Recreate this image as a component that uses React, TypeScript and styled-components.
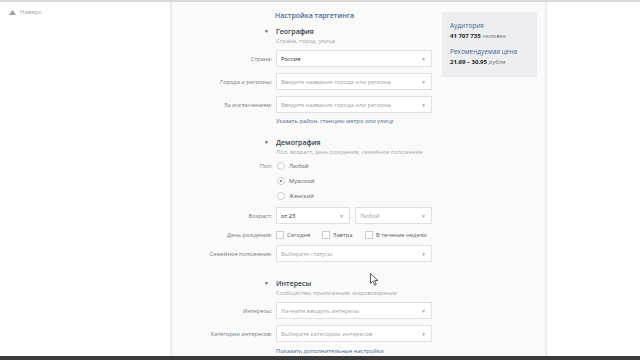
import React from "react";
import styled, { createGlobalStyle } from "styled-components";

const GlobalStyle = createGlobalStyle`
  html, body {
    margin: 0;
    padding: 0;
    background: #fff;
    font-family: "Open Sans", "Noto Sans", sans-serif;
  }
`;

const Page = styled.div`
  position: relative;
  width: 640px;
  height: 360px;
  overflow: hidden;
  display: flex;
  flex-direction: column;
  border-top: 2px solid #d9d9d9;
  box-sizing: border-box;
`;

const Body = styled.div`
  flex: 1;
  display: flex;
  min-height: 0;
`;

const Sidebar = styled.div`
  width: 170px;
  padding: 5px 0 0 9px;
  box-sizing: border-box;
`;

const UpLink = styled.div`
  display: flex;
  align-items: center;
  gap: 4px;
  height: 10px;
  font-size: 6px;
  color: #9aa1a8;
`;

const Main = styled.div`
  width: 377px;
  background: #fafafa;
  border-left: 2px solid #ececec;
  border-right: 2px solid #ececec;
  box-sizing: border-box;
  display: flex;
  gap: 10px;
  padding-top: 6px;
`;

const Form = styled.div`
  width: 260px;
  display: flex;
  flex-direction: column;
`;

const Row = styled.div<{ $h?: number; $mt?: number }>`
  display: grid;
  grid-template-columns: 100px 156px;
  column-gap: 4px;
  align-items: center;
  height: ${(p) => p.$h ?? 17}px;
  margin-top: ${(p) => p.$mt ?? 0}px;
`;

const Label = styled.div`
  text-align: right;
  font-size: 5.7px;
  color: #727a83;
  white-space: nowrap;
`;

const Title = styled.div`
  font-size: 7px;
  font-weight: 600;
  color: #45688e;
  white-space: nowrap;
  margin-left: -1px;
`;

const Arrow = styled.div`
  text-align: right;
  font-size: 5px;
  color: #5a6570;
  padding-right: 3px;
`;

const Heading = styled.div`
  font-size: 7px;
  font-weight: 600;
  color: #36414c;
  white-space: nowrap;
`;

const Hint = styled.div`
  font-size: 5.8px;
  color: #a0a6ad;
  white-space: nowrap;
`;

const LinkText = styled.div`
  font-size: 5.8px;
  color: #45688e;
  white-space: nowrap;
`;

const Select = styled.div<{ $filled?: boolean }>`
  height: 17px;
  box-sizing: border-box;
  background: #fff;
  border: 1px solid #dde1e6;
  display: flex;
  align-items: center;
  justify-content: space-between;
  padding: 0 5px 0 4px;
  font-size: 5.8px;
  color: ${(p) => (p.$filled ? "#222" : "#9aa0a6")};
  white-space: nowrap;
`;

const Caret = styled.span`
  font-size: 5px;
  color: #a7adb3;
`;

const Pair = styled.div`
  display: grid;
  grid-template-columns: 74px 77px;
  column-gap: 5px;
`;

const Options = styled.div`
  display: flex;
  align-items: center;
`;

const Radio = styled.span<{ $on?: boolean }>`
  width: 8px;
  height: 8px;
  box-sizing: border-box;
  border-radius: 50%;
  border: 1px solid #c9ced4;
  background: #fff;
  margin: 0 4px 0 1px;
  display: flex;
  align-items: center;
  justify-content: center;
  &::after {
    content: "";
    width: 2px;
    height: 2px;
    border-radius: 50%;
    background: ${(p) => (p.$on ? "#5b6b7b" : "transparent")};
  }
`;

const Check = styled.span`
  width: 8px;
  height: 8px;
  box-sizing: border-box;
  border: 1px solid #c9ced4;
  background: #fff;
  margin-right: 3px;
`;

const OptText = styled.span<{ $w?: number }>`
  font-size: 5.8px;
  color: #555d66;
  white-space: nowrap;
  width: ${(p) => (p.$w ? `${p.$w}px` : "auto")};
`;

const Info = styled.div`
  margin-top: 4px;
  width: 95px;
  height: 65px;
  background: #eceef2;
  box-sizing: border-box;
  padding: 9px 0 0 8px;
  display: flex;
  flex-direction: column;
`;

const InfoTitle = styled.div<{ $mt?: number }>`
  font-size: 6.5px;
  color: #45688e;
  line-height: 10px;
  margin-top: ${(p) => p.$mt ?? 0}px;
`;

const InfoValue = styled.div`
  font-size: 6px;
  color: #6d747b;
  line-height: 10px;
  white-space: nowrap;
  b {
    color: #222;
    font-weight: 700;
  }
`;

const BottomBar = styled.div`
  height: 4px;
  background: #3a3a3a;
`;

const Cursor = styled.svg`
  position: absolute;
  left: 370px;
  top: 271px;
`;

export default function App() {
  return (
    <>
      <GlobalStyle />
      <Page>
        <Body>
          <Sidebar>
            <UpLink>
              <svg width="7" height="5" viewBox="0 0 7 5">
                <path d="M3.5 0 L7 5 L0 5 Z" fill="#9aa1a8" />
              </svg>
              Наверх
            </UpLink>
          </Sidebar>
          <Main>
            <Form>
              <Row $h={14}>
                <span />
                <Title>Настройка таргетинга</Title>
              </Row>

              <Row $h={10} $mt={4}>
                <Arrow>▼</Arrow>
                <Heading>География</Heading>
              </Row>
              <Row $h={10}>
                <span />
                <Hint>Страна, город, улица</Hint>
              </Row>
              <Row $mt={4}>
                <Label>Страна:</Label>
                <Select $filled>
                  Россия<Caret>▼</Caret>
                </Select>
              </Row>
              <Row $mt={6}>
                <Label>Города и регионы:</Label>
                <Select>
                  Введите название города или региона<Caret>▼</Caret>
                </Select>
              </Row>
              <Row $mt={6}>
                <Label>За исключением:</Label>
                <Select>
                  Введите название города или региона<Caret>▼</Caret>
                </Select>
              </Row>
              <Row $h={10} $mt={3}>
                <span />
                <LinkText>Указать район, станцию метро или улицу</LinkText>
              </Row>

              <Row $h={10} $mt={11}>
                <Arrow>▼</Arrow>
                <Heading>Демография</Heading>
              </Row>
              <Row $h={10}>
                <span />
                <Hint>Пол, возраст, день рождения, семейное положение</Hint>
              </Row>
              <Row $h={15} $mt={1}>
                <Label>Пол:</Label>
                <Options>
                  <Radio />
                  <OptText>Любой</OptText>
                </Options>
              </Row>
              <Row $h={15}>
                <span />
                <Options>
                  <Radio $on />
                  <OptText>Мужской</OptText>
                </Options>
              </Row>
              <Row $h={15}>
                <span />
                <Options>
                  <Radio />
                  <OptText>Женский</OptText>
                </Options>
              </Row>
              <Row $mt={4}>
                <Label>Возраст:</Label>
                <Pair>
                  <Select $filled>
                    от 23<Caret>▼</Caret>
                  </Select>
                  <Select>
                    Любой<Caret>▼</Caret>
                  </Select>
                </Pair>
              </Row>
              <Row $h={12} $mt={5}>
                <Label>День рождения:</Label>
                <Options>
                  <Check />
                  <OptText $w={35}>Сегодня</OptText>
                  <Check />
                  <OptText $w={32}>Завтра</OptText>
                  <Check />
                  <OptText>В течение недели</OptText>
                </Options>
              </Row>
              <Row $mt={4}>
                <Label>Семейное положение:</Label>
                <Select>
                  Выберите статусы<Caret>▼</Caret>
                </Select>
              </Row>

              <Row $h={10} $mt={16}>
                <Arrow>▼</Arrow>
                <Heading>Интересы</Heading>
              </Row>
              <Row $h={10}>
                <span />
                <Hint>Сообщества, приложения, мировоззрение</Hint>
              </Row>
              <Row $mt={4}>
                <Label>Интересы:</Label>
                <Select>
                  Начните вводить интересы<Caret>▼</Caret>
                </Select>
              </Row>
              <Row $mt={6}>
                <Label>Категории интересов:</Label>
                <Select>
                  Выберите категорию интересов<Caret>▼</Caret>
                </Select>
              </Row>
              <Row $h={10} $mt={4}>
                <span />
                <LinkText>Показать дополнительные настройки</LinkText>
              </Row>
            </Form>

            <Info>
              <InfoTitle>Аудитория</InfoTitle>
              <InfoValue>
                <b>41 707 735</b> человек
              </InfoValue>
              <InfoTitle $mt={6}>Рекомендуемая цена</InfoTitle>
              <InfoValue>
                <b>21.69 – 30.95</b> рубля
              </InfoValue>
            </Info>
          </Main>
        </Body>
        <BottomBar />
        <Cursor width="9" height="13" viewBox="0 0 9 13">
          <path
            d="M0.5 0.5 L0.5 10.5 L3 8.2 L4.8 12.3 L6.3 11.6 L4.6 7.6 L8 7.6 Z"
            fill="#fff"
            stroke="#333"
            strokeWidth="0.8"
          />
        </Cursor>
      </Page>
    </>
  );
}
